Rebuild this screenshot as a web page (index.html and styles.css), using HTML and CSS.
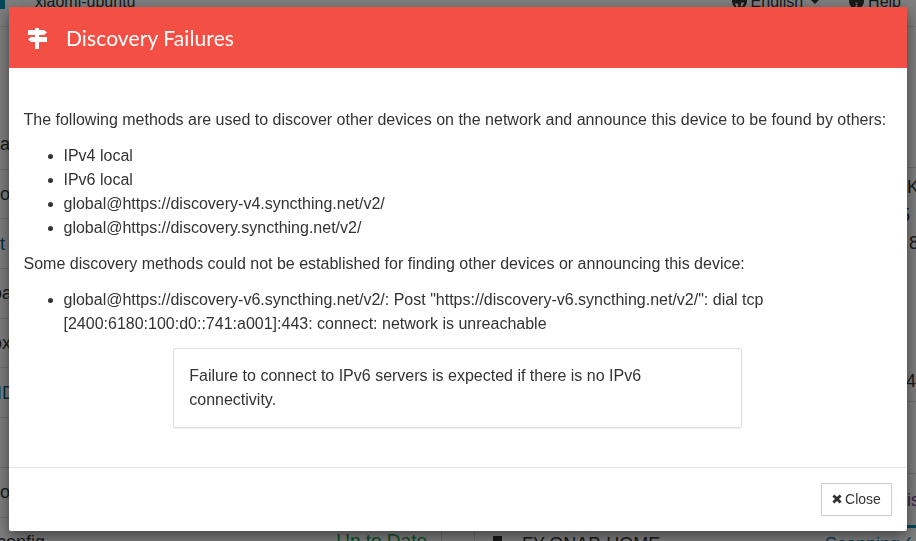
FILE: index.html
```html
<!DOCTYPE html>
<html lang="en">
<head>
    <meta charset="UTF-8">
    <meta name="viewport" content="width=device-width, initial-scale=1.0">
    <title>Discovery Failures</title>
    <link rel="stylesheet" href="styles.css">
</head>
<body>

<!-- page behind the dialog, only the edges show -->
<div class="page">
    <div class="nav">
        <span class="nav-logo"></span>
        <span class="nav-name">xiaomi-ubuntu</span>
        <span class="nav-menu">
            <svg class="nav-icon" viewBox="0 0 16 16"><circle cx="8" cy="8" r="8"/><path class="nav-icon-cut" d="M3 10h3l1 3-2 1zM10 9h3l-2 4h-2z"/></svg>
            English
            <span class="caret"></span>
        </span>
        <span class="nav-menu nav-help">
            <svg class="nav-icon" viewBox="0 0 16 16"><circle cx="8" cy="8" r="8"/><path class="nav-icon-cut" d="M7 9h2v1.5h-2zM7 11.5h2v2h-2z"/></svg>
            Help
        </span>
    </div>
    <div class="columns">
        <div class="col-left">
            <div class="row">a</div>
            <div class="row">o</div>
            <div class="row link">t</div>
            <div class="row cut-wide">oa</div>
            <div class="row cut-wide">ox</div>
            <div class="row link cut-small">ID</div>
            <div class="row"></div>
            <div class="row">o</div>
            <div class="row row-last">
                <span>config</span>
                <span class="up-to-date">Up to Date</span>
            </div>
        </div>
        <div class="col-right">
            <div class="stat-block">
                <div class="stat">Kr</div>
                <div class="stat stat-warn">5 I</div>
                <div class="stat stat-num">8</div>
                <div class="stat stat-gap">4</div>
            </div>
            <div class="stat-blank"></div>
            <div class="stat-link">is</div>
            <div class="panel-bar"></div>
            <div class="device">
                <span class="device-icon"></span>
                <span class="device-name">FY-QNAP-HOME</span>
                <span class="device-state">Scanning (</span>
            </div>
        </div>
    </div>
</div>

<div class="overlay">
    <div class="modal">
        <div class="modal-header">
            <svg class="modal-icon" viewBox="0 0 19 21">
                <rect x="7" y="0" width="4" height="21"/>
                <polygon points="0,2 16,2 19,4.5 16,7 0,7"/>
                <polygon points="3,9 19,9 19,14 3,14 0,11.5"/>
            </svg>
            <h4 class="modal-title">Discovery Failures</h4>
        </div>
        <div class="modal-body">
            <p>The following methods are used to discover other devices on the network and announce this device to be found by others:</p>
            <ul>
                <li>IPv4 local</li>
                <li>IPv6 local</li>
                <li>global@https://discovery-v4.syncthing.net/v2/</li>
                <li>global@https://discovery.syncthing.net/v2/</li>
            </ul>
            <p>Some discovery methods could not be established for finding other devices or announcing this device:</p>
            <ul>
                <li>global@https://discovery-v6.syncthing.net/v2/: Post "https://discovery-v6.syncthing.net/v2/": dial tcp [2400:6180:100:d0::741:a001]:443: connect: network is unreachable</li>
            </ul>
            <div class="note">Failure to connect to IPv6 servers is expected if there is no IPv6 connectivity.</div>
        </div>
        <div class="modal-footer">
            <button class="btn-close">
                <svg class="close-icon" viewBox="0 0 10 10"><path d="M0.4 2.4 2.4 0.4 5 3 7.6 0.4 9.6 2.4 7 5 9.6 7.6 7.6 9.6 5 7 2.4 9.6 0.4 7.6 3 5Z"/></svg>
                Close
            </button>
        </div>
    </div>
</div>

</body>
</html>
```

FILE: styles.css
```css
html, body {
    margin: 0;
    height: 100%;
    overflow: hidden;
}
body {
    font-family: "Liberation Sans", Arial, sans-serif;
    font-size: 16px;
    line-height: 24px;
    color: #333;
    background-color: #fff;
}

/* background page */
.page {
    height: 541px;
    overflow: hidden;
    font-size: 18px;
}
.nav {
    display: flex;
    align-items: center;
    height: 27px;
    box-sizing: border-box;
    border-bottom: 1px solid #e7e7e7;
    padding-bottom: 23px;
}
.nav-logo {
    width: 5px;
    height: 10px;
    margin-top: 4px;
    background-color: #0891b2;
}
.nav-name {
    margin-left: 30px;
    flex: 1;
    font-size: 16px;
}
.nav-menu {
    display: flex;
    align-items: center;
    gap: 4px;
    font-size: 16px;
}
.nav-help {
    margin-left: 30px;
    margin-right: 15px;
}
.nav-icon {
    width: 15px;
    height: 15px;
    fill: #333;
}
.nav-icon-cut {
    fill: #fff;
}
.caret {
    margin-left: 4px;
    border-top: 4px solid #333;
    border-left: 4px solid transparent;
    border-right: 4px solid transparent;
}
.columns {
    display: grid;
    grid-template-columns: 442px 442px;
    column-gap: 32px;
}
.col-left {
    padding-top: 93px;
    border-right: 1px solid #ddd;
}
.row {
    display: flex;
    align-items: center;
    justify-content: space-between;
    height: 49.7px;
    box-sizing: border-box;
    border-bottom: 1px solid #ddd;
}
.link {
    color: #0d5f86;
}
.cut-wide {
    text-indent: -8px;
}
.cut-small {
    text-indent: -3px;
}
.row-last {
    border-bottom: none;
    align-items: flex-start;
    height: 40px;
    margin-left: -3px;
    padding-top: 12px;
    padding-right: 14px;
}
.up-to-date {
    color: #16a34a;
    font-size: 19px;
    margin-top: -1px;
}
.col-right {
    padding-top: 140px;
    border-left: 1px solid #ddd;
    margin-right: -40px;
}
.stat-block {
    height: 235px;
    box-sizing: border-box;
    padding-top: 7px;
    border-top: 1px solid #ddd;
    border-bottom: 1px solid #ddd;
}
.stat, .stat-link {
    height: 28px;
    padding-left: 432px;
    white-space: nowrap;
}
.stat-warn {
    margin-left: -7px;
    word-spacing: 5px;
}
.stat-num {
    margin-left: 2px;
}
.stat-gap {
    margin-top: 110px;
    margin-left: -1px;
}
.stat-blank {
    height: 72px;
    box-sizing: border-box;
    border-bottom: 1px solid #ddd;
}
.stat-link {
    display: flex;
    align-items: center;
    height: 51px;
    color: #7b3fa0;
}
.panel-bar {
    height: 3px;
    background-color: #0891b2;
}
.device {
    display: flex;
    align-items: flex-start;
    padding: 4px 0 0 18px;
}
.device-icon {
    width: 9px;
    height: 16px;
    margin-top: 4px;
    background-color: #333;
}
.device-name {
    margin-left: 20px;
    width: 303px;
}
.device-state {
    color: #0d7ea8;
}

/* dialog */
.overlay {
    position: fixed;
    top: 0;
    right: 0;
    bottom: 0;
    left: 0;
    background-color: rgba(0, 0, 0, 0.5);
    padding: 7px 9px 9px 9px;
}
.modal {
    height: 524px;
    width: 898px;
    box-sizing: border-box;
    background-color: #fff;
    border-radius: 2px;
    box-shadow: 0 5px 15px rgba(0, 0, 0, 0.5);
}
.modal-header {
    display: flex;
    align-items: center;
    height: 61px;
    padding-top: 1px;
    box-sizing: border-box;
    background-color: #f44f44;
    color: #fff;
    padding-left: 19px;
}
.modal-icon {
    width: 19px;
    height: 21px;
    fill: #fff;
}
.modal-title {
    margin: 0 0 0 19px;
    font-family: Lato, sans-serif;
    font-size: 21px;
    font-weight: 400;
    letter-spacing: 0.1px;
}
.modal-body {
    height: 400px;
    box-sizing: border-box;
    padding: 40px 15px 0 14.5px;
    border-bottom: 1px solid #e5e5e5;
}
.modal-body p {
    margin: 0 0 12px 0;
}
.modal-body ul {
    margin: 0 0 12px 0;
    padding-left: 40px;
}
.note {
    width: 569px;
    box-sizing: border-box;
    margin: 12px auto 0 auto;
    padding: 15px;
    border: 1px solid #ddd;
    border-radius: 2px;
    box-shadow: 0 1px 1px rgba(0, 0, 0, 0.05);
}
.modal-footer {
    display: flex;
    justify-content: flex-end;
    padding: 15px;
}
.btn-close {
    display: flex;
    align-items: center;
    justify-content: center;
    gap: 3px;
    width: 71px;
    height: 33px;
    padding: 0 0 2px 0;
    font-family: "Liberation Sans", Arial, sans-serif;
    font-size: 14px;
    color: #333;
    background-color: #fff;
    border: 1px solid #ccc;
    border-radius: 1px;
}
.close-icon {
    width: 10px;
    height: 10px;
    fill: #333;
}
```
